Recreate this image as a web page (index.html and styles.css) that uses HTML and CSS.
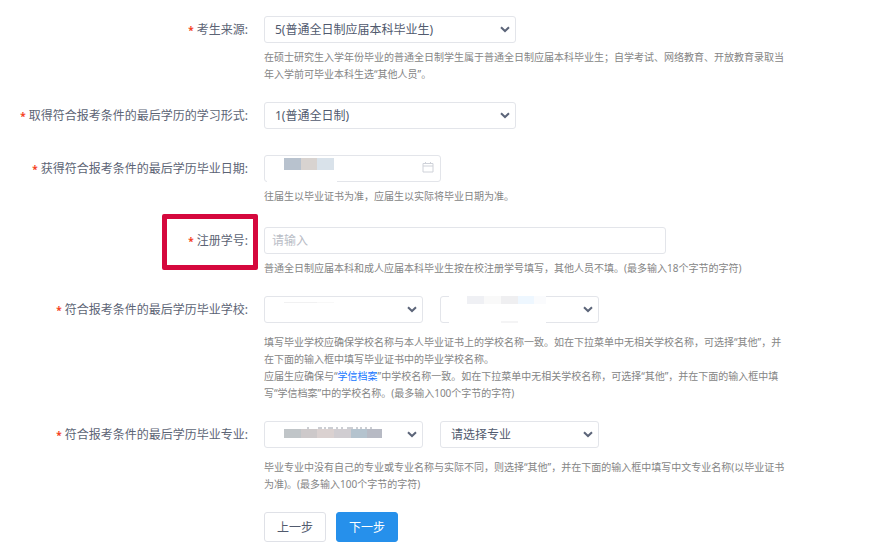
FILE: index.html
```html
<!DOCTYPE html>
<html lang="zh-CN">
<head>
<meta charset="utf-8">
<meta name="viewport" content="width=device-width, initial-scale=1">
<title>学历信息</title>
<link rel="stylesheet" href="styles.css">
</head>
<body>
<form class="form">
  <div class="row">
    <label class="label" for="source">考生来源:</label>
    <div class="content">
      <div class="select select-wide">
        <select id="source"><option>5(普通全日制应届本科毕业生)</option></select>
        <svg class="chevron" viewBox="0 0 10 7" aria-hidden="true"><path d="M1 1.2 5 5 9 1.2"/></svg>
      </div>
      <p class="help">在硕士研究生入学年份毕业的普通全日制学生属于普通全日制应届本科毕业生；自学考试、网络教育、开放教育录取当年入学前可毕业本科生选“其他人员”。</p>
    </div>
  </div>

  <div class="row row-plain">
    <label class="label" for="mode">取得符合报考条件的最后学历的学习形式:</label>
    <div class="content">
      <div class="select select-wide">
        <select id="mode"><option>1(普通全日制)</option></select>
        <svg class="chevron" viewBox="0 0 10 7" aria-hidden="true"><path d="M1 1.2 5 5 9 1.2"/></svg>
      </div>
    </div>
  </div>

  <div class="row row-date">
    <label class="label" for="date">获得符合报考条件的最后学历毕业日期:</label>
    <div class="content">
      <div class="date">
        <input id="date" type="text">
        <svg class="calendar" viewBox="0 0 12 12" aria-hidden="true"><path d="M1 2.5h10v8.500H1zM1 5h10M3.500 1v2M8.500 1v2"/></svg>
        <svg class="mask" viewBox="0 0 120 27" aria-hidden="true">
          <path fill="#fff" d="M3 24h70v3H3z"/>
          <path fill="#b8c2ce" d="M20 3h17v12H20z"/>
          <path fill="#d8d3d0" d="M37 3h16v12H37z"/>
          <path fill="#d9e2ea" d="M53 3h17v12H53z"/>
        </svg>
      </div>
      <p class="help">往届生以毕业证书为准，应届生以实际将毕业日期为准。</p>
    </div>
  </div>

  <div class="row">
    <label class="label marked" for="number">注册学号:</label>
    <div class="content">
      <input class="number" id="number" type="text" placeholder="请输入">
      <p class="help">普通全日制应届本科和成人应届本科毕业生按在校注册学号填写，其他人员不填。(最多输入18个字节的字符)</p>
    </div>
  </div>

  <div class="row row-pair">
    <label class="label" for="school-area">符合报考条件的最后学历毕业学校:</label>
    <div class="content">
      <div class="pair">
        <div class="select">
          <select id="school-area"><option></option></select>
          <svg class="chevron" viewBox="0 0 10 7" aria-hidden="true"><path d="M1 1.2 5 5 9 1.2"/></svg>
          <svg class="mask" viewBox="0 0 120 27" aria-hidden="true">
            <path fill="#f1f1f2" d="M20 6h33v1H20z"/>
            <path fill="#f8f8f8" d="M53 6h17v1H53z"/>
          </svg>
        </div>
        <div class="select">
          <select id="school" aria-label="毕业学校"><option></option></select>
          <svg class="chevron" viewBox="0 0 10 7" aria-hidden="true"><path d="M1 1.2 5 5 9 1.2"/></svg>
          <svg class="mask" viewBox="0 0 120 27" aria-hidden="true">
            <path fill="#fff" d="M9 0h97v8H9zM9 25h97v2H9z"/>
            <path fill="#eff0f4" d="M27 0h17v8H27z"/>
            <path fill="#f9f9f9" d="M44 0h17v8H44z"/>
            <path fill="#efeff1" d="M61 0h17v8H61z"/>
            <path fill="#eef7ff" d="M78 0h16v8H78z"/>
            <path fill="#fafbfd" d="M94 0h12v8H94z"/>
            <path fill="#f4f4f5" d="M61 25h17v2H61z"/>
          </svg>
        </div>
      </div>
      <p class="help">填写毕业学校应确保学校名称与本人毕业证书上的学校名称一致。如在下拉菜单中无相关学校名称，可选择“其他”，并在下面的输入框中填写毕业证书中的毕业学校名称。</p>
      <p class="help">应届生应确保与“<a href="#archive">学信档案</a>”中学校名称一致。如在下拉菜单中无相关学校名称，可选择“其他”，并在下面的输入框中填写“学信档案”中的学校名称。(最多输入100个字节的字符)</p>
    </div>
  </div>

  <div class="row row-pair">
    <label class="label" for="major-type">符合报考条件的最后学历毕业专业:</label>
    <div class="content">
      <div class="pair">
        <div class="select">
          <select id="major-type"><option></option></select>
          <svg class="chevron" viewBox="0 0 10 7" aria-hidden="true"><path d="M1 1.2 5 5 9 1.2"/></svg>
          <svg class="mask" viewBox="0 0 120 27" aria-hidden="true">
            <path stroke="#9a9ea8" d="M44 6v2M54 7h4M61 6v2M64 7h5M73 6v2M78 6v2M83 7h6M93 6v2M97 6v2M102 6v2M107 6v2"/>
            <path fill="#c0c5c8" d="M20 8h17v9H20z"/>
            <path fill="#cdc9ca" d="M37 8h16v9H37z"/>
            <path fill="#dad1d0" d="M53 8h17v9H53z"/>
            <path fill="#d0cdd1" d="M70 8h17v9H70z"/>
            <path fill="#b4c3ce" d="M87 8h16v9H87z"/>
            <path fill="#b7bac4" d="M103 8h15v9H103z"/>
          </svg>
        </div>
        <div class="select">
          <select id="major" aria-label="毕业专业"><option>请选择专业</option></select>
          <svg class="chevron" viewBox="0 0 10 7" aria-hidden="true"><path d="M1 1.2 5 5 9 1.2"/></svg>
        </div>
      </div>
      <p class="help">毕业专业中没有自己的专业或专业名称与实际不同，则选择“其他”，并在下面的输入框中填写中文专业名称(以毕业证书为准)。(最多输入100个字节的字符)</p>
    </div>
  </div>

  <div class="row">
    <div class="actions">
      <button type="button">上一步</button>
      <button type="submit" class="primary">下一步</button>
    </div>
  </div>
</form>
</body>
</html>
```
FILE: styles.css
```css
*,
*::before,
*::after {
  box-sizing: border-box;
}

body {
  margin: 0;
  background: #fff;
  color: #5c6475;
  font-family: "Noto Sans", "Noto Sans CJK SC", sans-serif;
  font-size: 12px;
}

.form {
  padding: 16px 83px 10px 0;
}

.row {
  display: grid;
  grid-template-columns: 248px minmax(0, 1fr);
  column-gap: 16px;
  align-items: start;
  margin-bottom: 19px;
}

.row-plain {
  margin-bottom: 26px;
}

.row-date {
  margin-bottom: 22px;
}

.label {
  position: relative;
  justify-self: end;
  line-height: 27px;
  white-space: nowrap;
}

.label::before {
  content: "*";
  margin-right: 3px;
  color: #f5431c;
  font-size: 10px;
  font-weight: 700;
  line-height: 1;
}

/* Frame drawn around the field that needs attention */
.marked::after {
  content: "";
  position: absolute;
  top: -13px;
  right: -10px;
  width: 96px;
  height: 56px;
  border: 5px solid #d5083d;
  border-radius: 2px;
}

select,
input {
  display: block;
  width: 100%;
  height: 27px;
  margin: 0;
  border: 1px solid #e3e5ea;
  border-radius: 3px;
  background: #fff;
  color: #515a6e;
  font: inherit;
}

select {
  appearance: none;
  padding: 0 24px 0 10px;
}

input {
  padding: 0 7px;
}

input::placeholder {
  color: #b9bdc6;
  opacity: 1;
}

.select,
.date {
  position: relative;
  width: 159px;
}

.select-wide {
  width: 252px;
}

.date {
  width: 177px;
}

.number {
  width: 402px;
}

.pair {
  display: flex;
  gap: 17px;
  margin-bottom: 11px;
}

.chevron {
  position: absolute;
  top: 10px;
  right: 6px;
  width: 10px;
  height: 7px;
  fill: none;
  stroke: #5c6579;
  stroke-width: 2;
  pointer-events: none;
}

.calendar {
  position: absolute;
  top: 6px;
  right: 7px;
  width: 12px;
  height: 12px;
  fill: none;
  stroke: #cfd2d9;
}

.mask {
  position: absolute;
  top: 0;
  left: 0;
  width: 120px;
  height: 27px;
  pointer-events: none;
}

.help {
  margin: 0;
  color: #858585;
  font-size: 10px;
  line-height: 17px;
}

.select + .help,
.date + .help,
.number + .help {
  margin-top: 6px;
}

.help a {
  color: #1677ff;
  text-decoration: none;
}

.actions {
  grid-column: 2;
  display: flex;
  gap: 10px;
}

button {
  height: 30px;
  padding: 0 12px;
  border: 1px solid #dfe1e7;
  border-radius: 3px;
  background: #fff;
  color: #515a6e;
  font: inherit;
}

.primary {
  border-color: #2690eb;
  background: #2690eb;
  color: #fff;
}
```
